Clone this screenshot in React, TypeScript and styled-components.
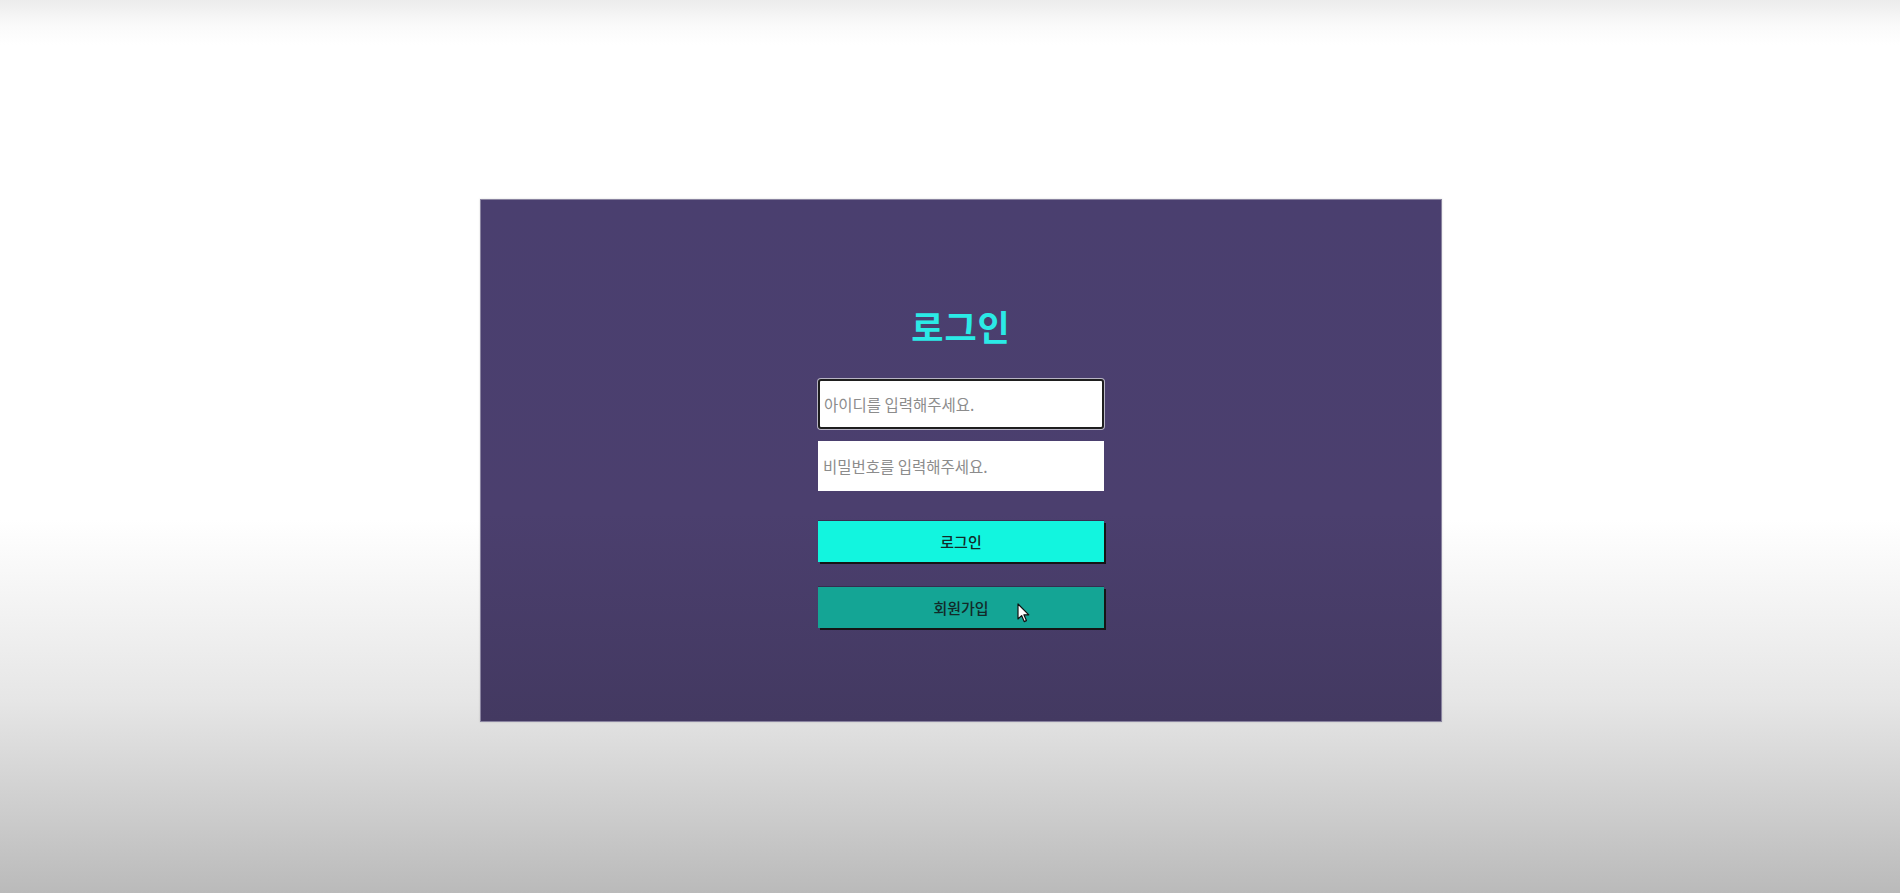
import React from "react";
import styled, { createGlobalStyle } from "styled-components";

const GlobalStyle = createGlobalStyle`
  html, body {
    margin: 0;
    padding: 0;
  }
  body {
    font-family: "Noto Sans CJK KR", "Noto Sans", sans-serif;
  }
`;

function App() {
  return (
    <Page>
      <GlobalStyle />
      <LoginPanel>
        <Title>로그인</Title>
        <Form>
          <TextInput className="focused" type="text" placeholder="아이디를 입력해주세요." />
          <TextInput type="password" placeholder="비밀번호를 입력해주세요." />
          <ButtonGroup>
            <ActionButton type="button">로그인</ActionButton>
            <ActionButton type="button" $variant="secondary">
              회원가입
              <Cursor />
            </ActionButton>
          </ButtonGroup>
        </Form>
      </LoginPanel>
    </Page>
  );
}

const Cursor = () => {
  return (
    <CursorWrap>
      <svg width="13" height="20" viewBox="0 0 13 20">
        <path
          d="M1 1 L1 16 L4.6 12.6 L7.2 18.6 L9.4 17.6 L6.9 11.8 L11.8 11.8 Z"
          fill="#fff"
          stroke="#111"
          strokeWidth="1.2"
          strokeLinejoin="round"
        />
      </svg>
    </CursorWrap>
  );
};

const Page = styled.div`
  min-height: 893px;
  box-sizing: border-box;
  padding: 199px 0 0 480px;
  background: linear-gradient(
    to bottom,
    #ececec 0px,
    #fafafa 25px,
    #ffffff 45px,
    #ffffff 520px,
    #e6e6e6 700px,
    #cbcbcb 820px,
    #bababa 893px
  );
`;

const LoginPanel = styled.section`
  width: 962px;
  height: 523px;
  box-sizing: border-box;
  display: flex;
  flex-direction: column;
  align-items: center;
  padding-top: 106px;
  background: linear-gradient(to bottom, #4a3f6f 0%, #4b3f6e 60%, #433961 100%);
  border: 1px solid #8a84a0;
  box-shadow: 0 0 2px rgba(0, 0, 0, 0.15);
`;

const Title = styled.h1`
  margin: 0;
  font-size: 35px;
  line-height: 40px;
  font-weight: 700;
  color: #2beae6;
  letter-spacing: 1px;
`;

const Form = styled.form`
  display: flex;
  flex-direction: column;
  align-items: center;
  gap: 12px;
  margin-top: 33px;
  width: 286px;
`;

const TextInput = styled.input`
  width: 286px;
  height: 50px;
  box-sizing: border-box;
  padding: 0 4px;
  border: 1px solid #ffffff;
  background: #ffffff;
  font-family: inherit;
  font-size: 15.5px;
  color: #333;
  outline: none;

  &::placeholder {
    color: #8c8c8c;
  }

  &.focused {
    border: 2px solid #1e1e1e;
    border-radius: 3px;
    box-shadow: 0 0 0 1px #b8b4c4;
  }
`;

const ButtonGroup = styled.div`
  display: flex;
  flex-direction: column;
  gap: 25px;
  margin-top: 18px;
`;

const ActionButton = styled.button<{ $variant?: "primary" | "secondary" }>`
  position: relative;
  width: 286px;
  height: 41px;
  border: none;
  border-radius: 0;
  background: ${(p) => (p.$variant === "secondary" ? "#14a595" : "#12f5df")};
  box-shadow: 2px 2px 0 #151515, 0 -1px 0 rgba(0, 0, 0, 0.25);
  font-family: inherit;
  font-size: 15px;
  font-weight: 500;
  color: #122a29;
  cursor: pointer;
`;

const CursorWrap = styled.span`
  position: absolute;
  left: 199px;
  top: 16px;
  display: block;
  line-height: 0;
  pointer-events: none;
`;

export default App;
